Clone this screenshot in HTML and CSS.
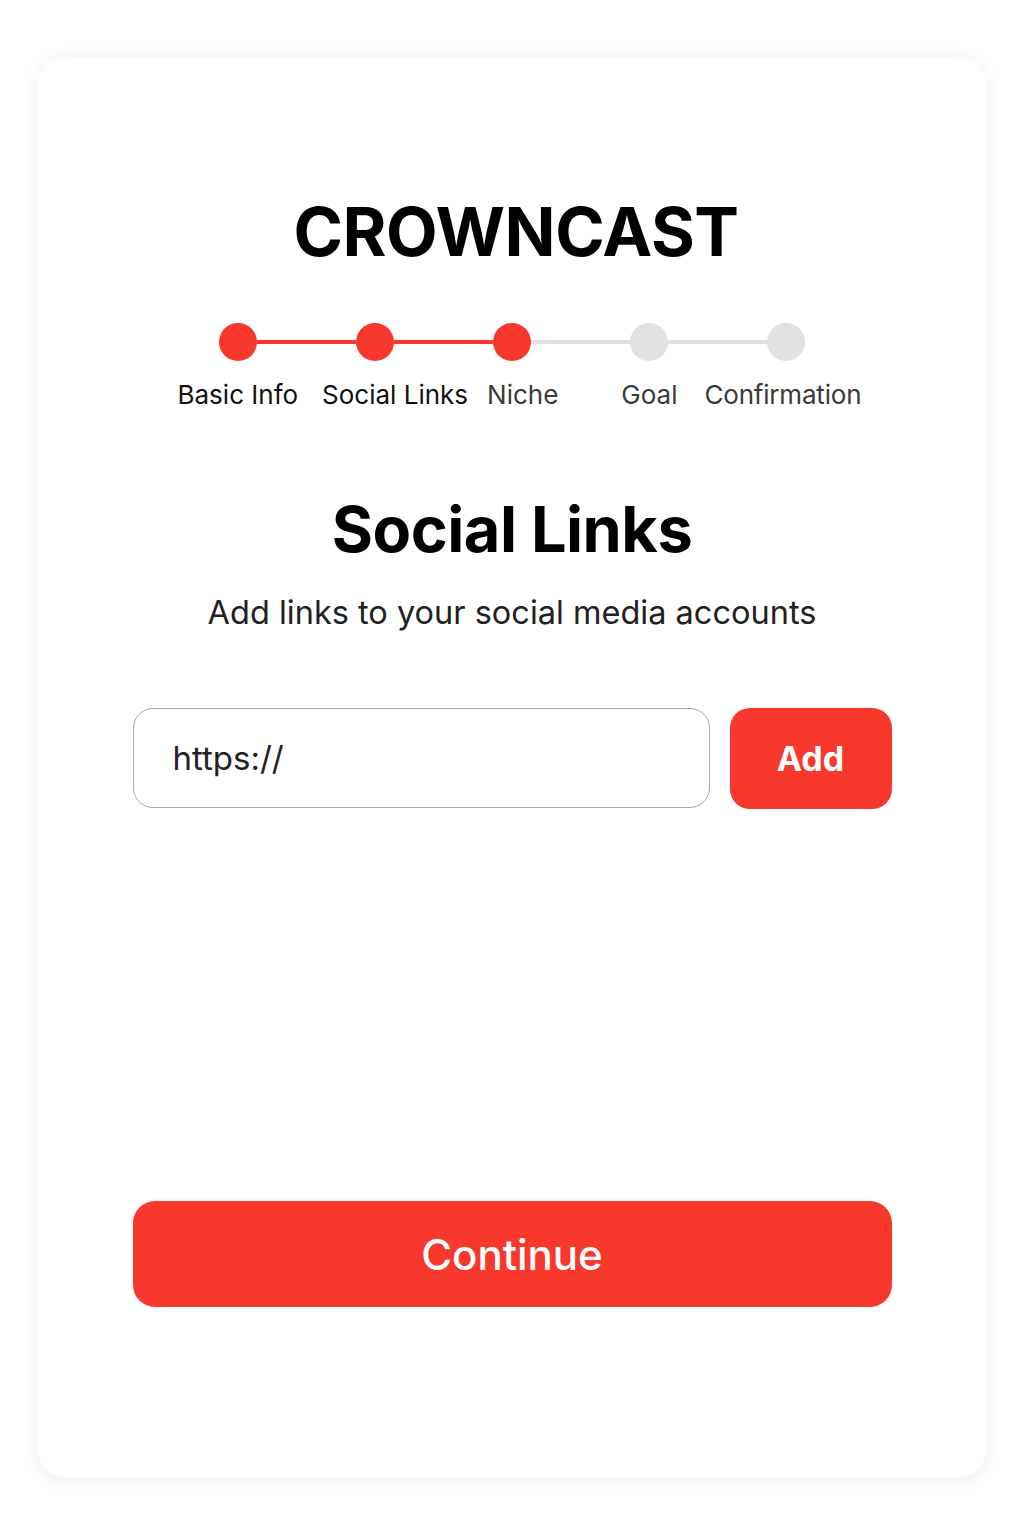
FILE: index.html
```html
<!DOCTYPE html>
<html>
<head>
<meta charset="utf-8">
<link rel="stylesheet" href="styles.css">
</head>
<body>
<div class="page">
  <div class="card">
    <h1 class="brand">CROWNCAST</h1>
    <div class="stepper">
      <div class="track">
        <span class="dot on"></span><span class="line on"></span>
        <span class="dot on"></span><span class="line on"></span>
        <span class="dot on"></span><span class="line"></span>
        <span class="dot"></span><span class="line"></span>
        <span class="dot"></span>
      </div>
      <div class="labels">
        <span class="lbl done l1">Basic Info</span>
        <span class="lbl done l2">Social Links</span>
        <span class="lbl l3">Niche</span>
        <span class="lbl l4">Goal</span>
        <span class="lbl l5">Confirmation</span>
      </div>
    </div>
    <h2 class="title">Social Links</h2>
    <p class="subtitle">Add links to your social media accounts</p>
    <div class="link-row">
      <div class="input">https://</div>
      <button class="add">Add</button>
    </div>
    <div class="spacer"></div>
    <button class="continue">Continue</button>
  </div>
</div>
</body>
</html>
```

FILE: styles.css
```css
* { box-sizing: border-box; }
html, body { margin: 0; padding: 0; background: #ffffff; }
body { font-family: Inter, "Liberation Sans", Arial, sans-serif; color: #111; }
.page { width: 1024px; height: 1536px; padding: 57px 38px 58px 38px; }
.card {
  height: 1421px;
  background: #fff;
  border-radius: 28px;
  box-shadow: 0 2px 18px rgba(0,0,0,0.07);
  padding: 0 95px;
  display: flex;
  flex-direction: column;
  align-items: center;
}
.brand {
  margin: 130px 0 0 8px;
  font-size: 67px;
  font-weight: 700;
  letter-spacing: -0.5px;
  line-height: 90px;
  color: #000;
}
.stepper { margin-top: 46px; width: 759px; }
.track { display: flex; align-items: center; padding-left: 86px; }
.dot { width: 38px; height: 38px; border-radius: 50%; background: #e2e2e2; flex: none; }
.dot.on { background: #f8382c; }
.line { width: 99px; height: 4px; background: #e2e2e2; flex: none; }
.line.on { background: #f8382c; }
.labels { display: flex; margin-top: 19px; padding-left: 45px; font-size: 26px; line-height: 30px; color: #3a3a3a; white-space: nowrap; }
.lbl.done { color: #111; }
.l2 { margin-left: 24px; }
.l3 { margin-left: 19px; }
.l4 { margin-left: 63px; }
.l5 { margin-left: 27px; letter-spacing: -0.2px; }
.title {
  margin: 81px 0 0 0;
  font-size: 63px;
  font-weight: 700;
  line-height: 76px;
  color: #000;
  letter-spacing: -0.5px;
}
.subtitle {
  margin: 26px 0 0 0;
  font-size: 32.5px;
  line-height: 40px;
  color: #222;
}
.link-row { display: flex; width: 759px; gap: 20px; margin-top: 75px; }
.input {
  flex: 1;
  height: 100px;
  border: 1px solid #a8a8a8;
  border-radius: 20px;
  padding-left: 39px;
  display: flex;
  align-items: center;
  font-size: 33px;
  color: #222;
}
.add {
  width: 162px;
  height: 101px;
  border: none;
  border-radius: 20px;
  background: #f8382c;
  color: #fff;
  font-family: inherit;
  font-size: 34px;
  font-weight: 700;
}
.spacer { flex: 1; }
.continue {
  width: 759px;
  height: 106px;
  margin-bottom: 171px;
  border: none;
  border-radius: 22px;
  background: #f8382c;
  color: #fff;
  font-family: inherit;
  font-size: 42px;
  font-weight: 500;
}
```
